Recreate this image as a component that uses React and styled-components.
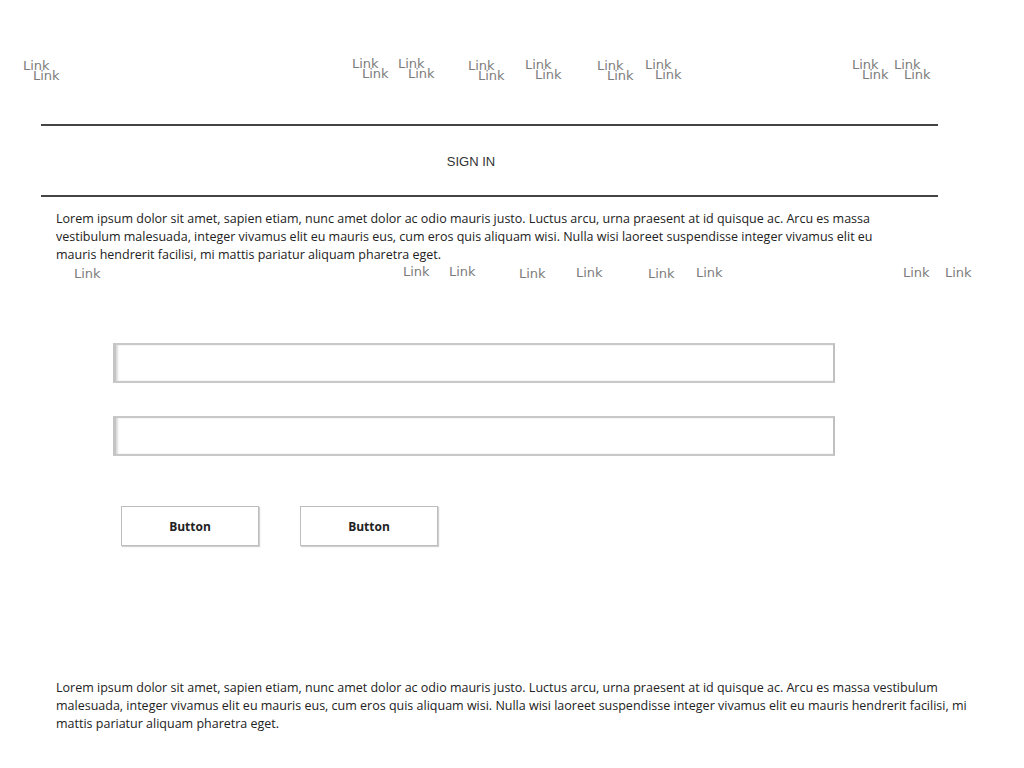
import React from 'react'
import styled, { createGlobalStyle } from 'styled-components'

const GlobalStyle = createGlobalStyle`
  html, body {
    margin: 0;
    padding: 0;
    background: #fff;
  }
`

const lorem1 =
  'Lorem ipsum dolor sit amet, sapien etiam, nunc amet dolor ac odio mauris justo. Luctus arcu, urna praesent at id quisque ac. Arcu es massa vestibulum malesuada, integer vivamus elit eu mauris eus, cum eros quis aliquam wisi. Nulla wisi laoreet suspendisse integer vivamus elit eu mauris hendrerit facilisi, mi mattis pariatur aliquam pharetra eget.'

// x = left edge of the pair, dy = small vertical nudge
const topPairs = [
  { x: 23, dy: 1 },
  { x: 352, dy: -1 },
  { x: 398, dy: -1 },
  { x: 468, dy: 1 },
  { x: 525, dy: 0 },
  { x: 597, dy: 1 },
  { x: 645, dy: 0 },
  { x: 852, dy: 0 },
  { x: 894, dy: 0 },
]

const subLinks = [
  { x: 74, dy: 1 },
  { x: 403, dy: -1 },
  { x: 449, dy: -1 },
  { x: 519, dy: 1 },
  { x: 576, dy: 0 },
  { x: 648, dy: 1 },
  { x: 696, dy: 0 },
  { x: 903, dy: 0 },
  { x: 945, dy: 0 },
]

const PAIR_W = 37
const LINK_W = 27

const App = () => {
  return (
    <Page>
      <GlobalStyle />
      <Header>
        <NavRow>
          {topPairs.map((p, i) => (
            <NavPair
              key={i}
              $ml={i === 0 ? p.x : p.x - topPairs[i - 1].x - PAIR_W}
              $dy={p.dy}
            >
              <NavLink href="#">Link</NavLink>
              <NavLink href="#" $sub>Link</NavLink>
            </NavPair>
          ))}
        </NavRow>
      </Header>
      <Rule />
      <SignInBar>SIGN IN</SignInBar>
      <Rule />
      <Paragraph $width={840} $top={13}>{lorem1}</Paragraph>
      <SubRow>
        {subLinks.map((l, i) => (
          <SubLink
            key={i}
            href="#"
            $ml={i === 0 ? l.x : l.x - subLinks[i - 1].x - LINK_W}
            $dy={l.dy}
          >
            Link
          </SubLink>
        ))}
      </SubRow>
      <Form>
        <TextInput type="text" />
        <TextInput type="text" />
        <Buttons>
          <Button type="button">Button</Button>
          <Button type="button">Button</Button>
        </Buttons>
      </Form>
      <Paragraph $width={945} $top={133}>{lorem1}</Paragraph>
    </Page>
  )
}

const Page = styled.div`
  width: 1024px;
  min-height: 768px;
  font-family: "Open Sans", "Liberation Sans", sans-serif;
`

const Header = styled.header`
  height: 124px;
  padding-top: 57px;
  box-sizing: border-box;
`

const NavRow = styled.nav`
  display: flex;
  align-items: flex-start;
`

const NavPair = styled.div`
  display: flex;
  flex-direction: column;
  width: ${PAIR_W}px;
  margin-left: ${p => p.$ml}px;
  margin-top: ${p => p.$dy}px;
`

const NavLink = styled.a`
  font-family: "DejaVu Sans", "Liberation Sans", sans-serif;
  font-size: 13px;
  line-height: 15px;
  color: #7c7c7c;
  text-decoration: none;
  white-space: nowrap;
  margin-left: ${p => (p.$sub ? '10px' : '0')};
  margin-top: ${p => (p.$sub ? '-5px' : '0')};
`

const Rule = styled.hr`
  margin: 0 0 0 41px;
  width: 897px;
  height: 2px;
  border: none;
  background: #444;
`

const SignInBar = styled.div`
  height: 69px;
  margin-left: 41px;
  width: 897px;
  padding: 2px 37px 0 0;
  box-sizing: border-box;
  display: flex;
  align-items: center;
  justify-content: center;
  font-family: "Liberation Sans", Arial, sans-serif;
  font-size: 13px;
  color: #333;
`

const Paragraph = styled.p`
  margin: ${p => p.$top}px 0 0 56px;
  width: ${p => p.$width}px;
  font-size: 12.5px;
  line-height: 18px;
  color: #222;
`

const SubRow = styled.div`
  display: flex;
  align-items: flex-start;
  margin-top: 1px;
`

const SubLink = styled.a`
  width: ${LINK_W}px;
  margin-left: ${p => p.$ml}px;
  margin-top: ${p => p.$dy}px;
  font-family: "DejaVu Sans", "Liberation Sans", sans-serif;
  font-size: 13px;
  line-height: 15px;
  color: #7c7c7c;
  text-decoration: none;
  white-space: nowrap;
`

const Form = styled.form`
  margin-top: 62px;
  display: flex;
  flex-direction: column;
  gap: 33px;
`

const TextInput = styled.input`
  display: block;
  margin-left: 113px;
  width: 722px;
  height: 40px;
  box-sizing: border-box;
  border: 2px solid #c8c8c8;
  border-left: 3px solid #c4c4c4;
  border-right: 2px solid #c0c0c0;
  box-shadow: inset 2px 0 2px #dcdcdc;
  background: #fff;
  outline: none;
`

const Buttons = styled.div`
  display: flex;
  gap: 41px;
  margin-left: 121px;
  margin-top: 17px;
`

const Button = styled.button`
  width: 138px;
  height: 40px;
  box-sizing: border-box;
  background: #fff;
  border: 1px solid #bdbdbd;
  box-shadow: 1px 1px 1px #d0d0d0;
  font-family: "Open Sans", "Liberation Sans", sans-serif;
  font-weight: 700;
  font-size: 12px;
  color: #222;
  cursor: pointer;
`

export default App
